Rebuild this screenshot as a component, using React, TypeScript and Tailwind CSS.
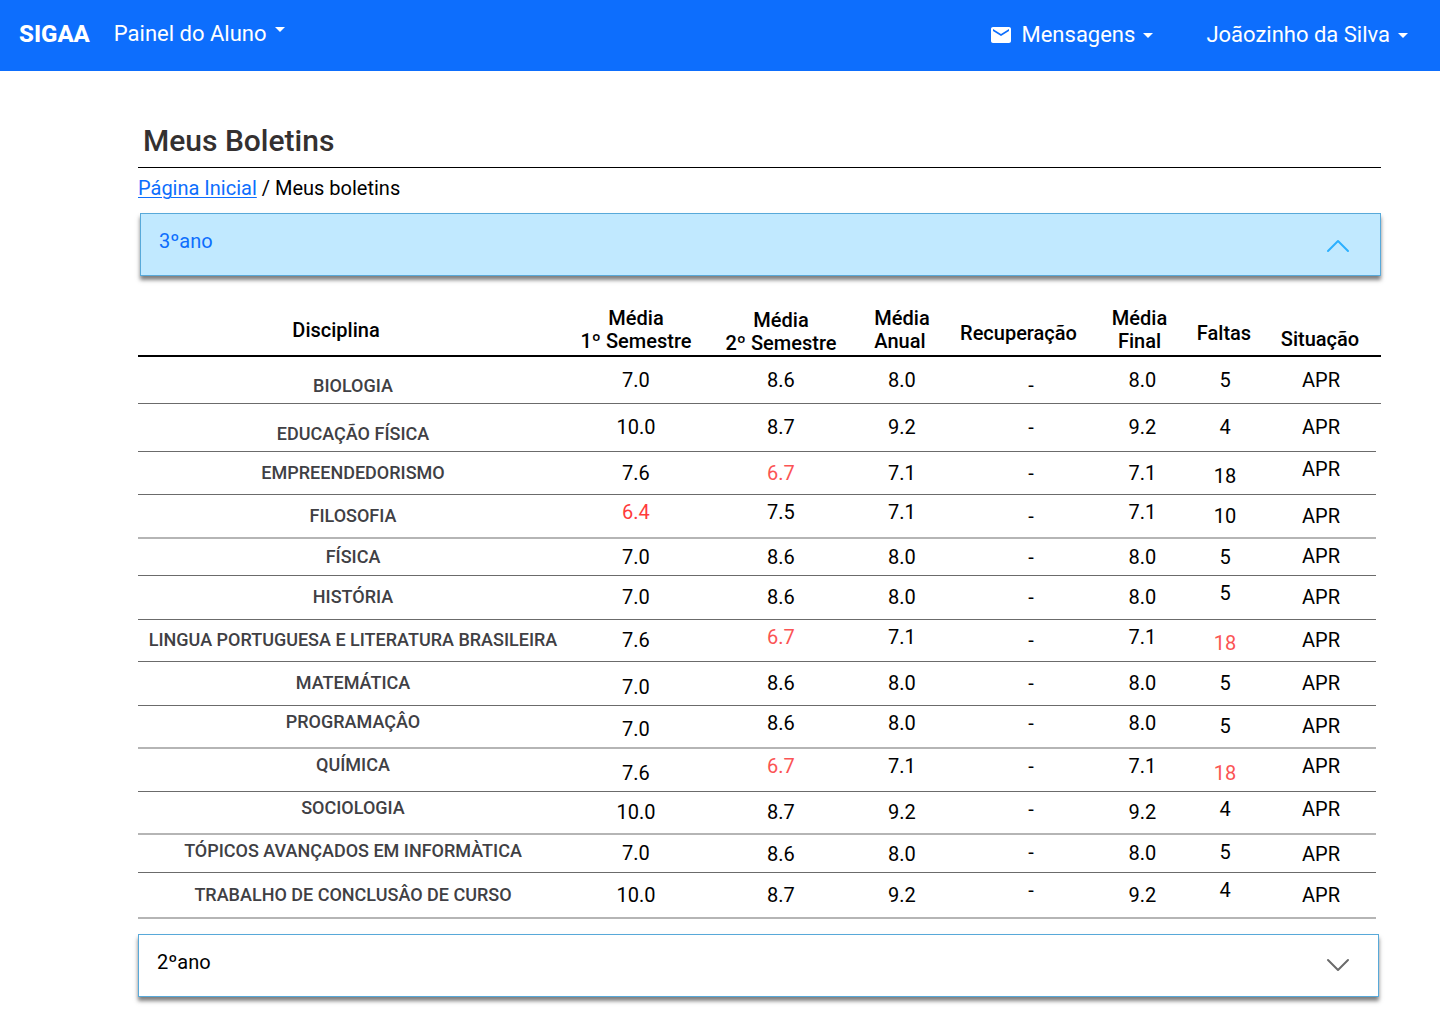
import { useState } from "react";
import { MdEmail } from "react-icons/md";

type Align = "T" | "M" | "B";

const alignClass: Record<Align, string> = {
  T: "align-top",
  M: "align-middle",
  B: "align-bottom",
};

const columnPadding = ["", "", "", "pr-[10px]", "", "", "", "pr-[5px]"];

type Row = {
  height: string;
  line: string;
  cells: string[];
  align: string;
};

const thin = "border-b border-[#6b6b6b]";
const soft = "border-b-2 border-[#b5b5b5]";

const rows: Row[] = [
  { height: "h-[47px]", line: thin, cells: ["BIOLOGIA", "7.0", "8.6", "8.0", "-", "8.0", "5", "APR"], align: "BMMMBMMM" },
  { height: "h-[48px]", line: thin, cells: ["EDUCAÇÃO FÍSICA", "10.0", "8.7", "9.2", "-", "9.2", "4", "APR"], align: "BMMMMMMM" },
  { height: "h-[43px]", line: thin, cells: ["EMPREENDEDORISMO", "7.6", "6.7", "7.1", "-", "7.1", "18", "APR"], align: "MMMMMMBT" },
  { height: "h-[44px]", line: soft, cells: ["FILOSOFIA", "6.4", "7.5", "7.1", "-", "7.1", "10", "APR"], align: "MTTTMTMM" },
  { height: "h-[37px]", line: thin, cells: ["FÍSICA", "7.0", "8.6", "8.0", "-", "8.0", "5", "APR"], align: "MMMMMMMT" },
  { height: "h-[44px]", line: thin, cells: ["HISTÓRIA", "7.0", "8.6", "8.0", "-", "8.0", "5", "APR"], align: "MMMMMMTM" },
  { height: "h-[42px]", line: thin, cells: ["LINGUA PORTUGUESA E LITERATURA BRASILEIRA", "7.6", "6.7", "7.1", "-", "7.1", "18!", "APR"], align: "MMTTMTBM" },
  { height: "h-[44px]", line: thin, cells: ["MATEMÁTICA", "7.0", "8.6", "8.0", "-", "8.0", "5", "APR"], align: "MBMMMMMM" },
  { height: "h-[43px]", line: soft, cells: ["PROGRAMAÇÂO", "7.0", "8.6", "8.0", "-", "8.0", "5", "APR"], align: "TBTTTTMM" },
  { height: "h-[43px]", line: thin, cells: ["QUÍMICA", "7.6", "6.7", "7.1", "-", "7.1", "18!", "APR"], align: "TBTTTTBT" },
  { height: "h-[43px]", line: soft, cells: ["SOCIOLOGIA", "10.0", "8.7", "9.2", "-", "9.2", "4", "APR"], align: "TMMMTMTT" },
  { height: "h-[38px]", line: thin, cells: ["TÓPICOS AVANÇADOS EM INFORMÀTICA", "7.0", "8.6", "8.0", "-", "8.0", "5", "APR"], align: "TMBBTMTB" },
  { height: "h-[46px]", line: soft, cells: ["TRABALHO DE CONCLUSÂO DE CURSO", "10.0", "8.7", "9.2", "-", "9.2", "4", "APR"], align: "MMMMTMTM" },
];

function valueColor(value: string) {
  if (value === "6.4") return "text-[#ff3b3b]";
  if (value === "6.7" || value.endsWith("!")) return "text-[#fb5454]";
  return "text-black";
}

function Caret() {
  return (
    <svg width="10" height="5" viewBox="0 0 10 5" aria-hidden="true" className="shrink-0">
      <path d="M0 0h10L5 5z" fill="currentColor" />
    </svg>
  );
}

function Chevron({ up }: { up: boolean }) {
  return (
    <svg
      width="24"
      height="14"
      viewBox="0 0 24 14"
      fill="none"
      stroke="currentColor"
      strokeWidth="2"
      strokeLinecap="round"
      strokeLinejoin="round"
      aria-hidden="true"
      className="shrink-0"
    >
      <path d={up ? "M2 12 12 2l10 10" : "M2 2l10 10L22 2"} />
    </svg>
  );
}

function Grades() {
  return (
    <table className="mt-7 w-full table-fixed border-separate border-spacing-0 text-center text-xl leading-[23px]">
      <colgroup>
        <col />
        <col className="w-[136px]" />
        <col className="w-[154px]" />
        <col className="w-[98px]" />
        <col className="w-[150px]" />
        <col className="w-[73px]" />
        <col className="w-[92px]" />
        <col className="w-[105px]" />
        <col className="w-[5px]" />
      </colgroup>
      <thead>
        <tr className="h-[53px] *:border-b-2 *:border-black *:font-medium">
          <th scope="col" className="pt-0.5 pr-[34px] align-middle">Disciplina</th>
          <th scope="col" className="align-middle">Média<br />1º Semestre</th>
          <th scope="col" className="align-bottom">Média<br />2º Semestre</th>
          <th scope="col" className="pr-[10px] align-middle">
            <span className="inline-block text-left align-top">Média<br />Anual</span>
          </th>
          <th scope="col" className="pt-2 pr-[25px] align-middle">Recuperação</th>
          <th scope="col" className="pr-[6px] align-middle">Média<br />Final</th>
          <th scope="col" className="pt-2 pr-0.5 align-middle">Faltas</th>
          <th scope="col" className="pr-[7px] pb-1 align-bottom">Situação</th>
          <td />
        </tr>
      </thead>
      <tbody>
        {rows.map((row, r) => (
          <tr key={row.cells[0]} className={row.height}>
            {row.cells.map((cell, c) => {
              const align = alignClass[row.align[c] as Align];
              return c === 0 ? (
                <th
                  key={c}
                  scope="row"
                  className={`pt-1 pb-1.5 text-lg leading-[23px] font-medium whitespace-nowrap text-[#404044] ${row.line} ${align}`}
                >
                  {cell}
                </th>
              ) : (
                <td key={c} className={`py-1.5 ${columnPadding[c]} ${valueColor(cell)} ${row.line} ${align}`}>
                  {cell.replace("!", "")}
                </td>
              );
            })}
            <td className={r === 0 ? row.line : ""} />
          </tr>
        ))}
      </tbody>
    </table>
  );
}

export default function App() {
  const [open, setOpen] = useState(true);
  const [secondOpen, setSecondOpen] = useState(false);

  return (
    <div className="min-h-screen bg-white pb-6 font-['Roboto',sans-serif] text-black">
      <header className="flex h-[71px] items-start justify-between bg-[#0d6efd] pt-5 pr-8 pl-[19px] text-[22px] leading-7 text-white">
        <div className="flex items-center">
          <a href="#" className="text-2xl leading-7 font-extrabold">SIGAA</a>
          <button type="button" className="ml-6 flex gap-2">
            Painel do Aluno
            <span className="pt-[7px]"><Caret /></span>
          </button>
        </div>
        <nav className="flex items-center pt-px">
          <button type="button" className="flex items-center">
            <MdEmail className="mr-[9px] size-6" aria-hidden="true" />
            Mensagens
            <span className="ml-2"><Caret /></span>
          </button>
          <button type="button" className="ml-[53px] flex items-center gap-2">
            Joãozinho da Silva
            <Caret />
          </button>
        </nav>
      </header>

      <main className="pt-[51px] pr-[59px] pl-[138px]">
        <h1 className="border-b border-black pb-[7px] pl-[5px] text-3xl leading-[38px] font-medium text-[#343030]">
          Meus Boletins
        </h1>
        <nav aria-label="Breadcrumb" className="mt-2 text-xl leading-6">
          <a href="#" className="text-[#0d6efd] underline decoration-1 underline-offset-2">Página Inicial</a> / Meus boletins
        </nav>

        <button
          type="button"
          aria-expanded={open}
          onClick={() => setOpen(!open)}
          className="mt-[13px] ml-[2px] flex h-[63px] w-[calc(100%-2px)] items-center justify-between border border-[#58a9d9] bg-[#c1e9ff] pr-[30px] pl-[18px] text-xl leading-6 text-[#0d6efd] shadow-[0_4px_4px_rgba(0,0,0,0.5)]"
        >
          <span className="pb-2">3ºano</span>
          <span className="pt-0.5 text-[#2cb0ff]"><Chevron up={open} /></span>
        </button>

        {open && <Grades />}

        <div className="pt-[15px] pr-[2px]">
          <button
            type="button"
            aria-expanded={secondOpen}
            onClick={() => setSecondOpen(!secondOpen)}
            className="flex h-[63px] w-full items-center justify-between border border-[#58a9d9] bg-white pr-7 pl-[18px] text-xl leading-6 shadow-[0_4px_4px_rgba(0,0,0,0.5)]"
          >
            <span className="pb-2">2ºano</span>
            <span className="pb-0.5 text-[#6b6b6b]"><Chevron up={secondOpen} /></span>
          </button>
        </div>
      </main>
    </div>
  );
}
